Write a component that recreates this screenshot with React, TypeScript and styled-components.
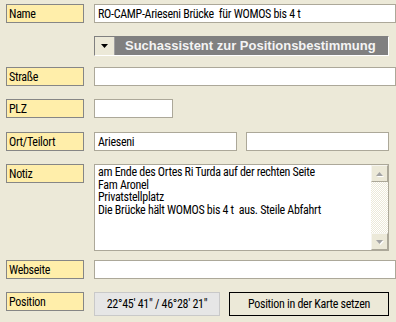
import React from 'react'
import styled, { createGlobalStyle } from 'styled-components'

const GlobalStyle = createGlobalStyle`
    html, body {
        margin: 0;
        padding: 0;
        background: #ece9d8;
    }
    body {
        font-family: "Roboto Condensed", "Liberation Sans", Arial, sans-serif;
        font-size: 12px;
        letter-spacing: -0.3px;
        color: #000;
    }
`

const Form = styled.div`
    width: 396px;
    height: 322px;
    padding: 0 0 0 6px;
    box-sizing: border-box;
    display: flex;
    flex-direction: column;
    overflow: hidden;
`

const Row = styled.div<{ $top: number; $height?: number }>`
    display: flex;
    align-items: flex-start;
    gap: 10px;
    margin-top: ${({ $top }) => $top}px;
    height: ${({ $height }) => $height ?? 19}px;
`

const Label = styled.div<{ $hidden?: boolean }>`
    width: 78px;
    height: 19px;
    box-sizing: border-box;
    flex: none;
    border: 1px solid ${({ $hidden }) => ($hidden ? 'transparent' : '#868686')};
    background: ${({ $hidden }) => ($hidden ? 'transparent' : '#ffeeaa')};
    padding: 2px 0 0 2px;
    line-height: 14px;
    white-space: nowrap;
`

const Fields = styled.div`
    display: flex;
    gap: 9px;
    width: 295px;
`

const Input = styled.div<{ $width?: number }>`
    box-sizing: border-box;
    height: 19px;
    width: ${({ $width }) => ($width ? `${$width}px` : '100%')};
    background: #fff;
    border: 1px solid #aca899;
    padding: 2px 0 0 3px;
    line-height: 14px;
    white-space: nowrap;
    overflow: hidden;
`

const SearchBar = styled.div`
    box-sizing: border-box;
    width: 295px;
    height: 20px;
    display: flex;
    border-top: 1px solid #808080;
    border-left: 1px solid #808080;
    border-right: 1px solid #fff;
    border-bottom: 1px solid #fff;
    background: #808080;
`

const DropButton = styled.div`
    box-sizing: border-box;
    width: 20px;
    flex: none;
    background: #ece9d8;
    border-right: 1px solid #a0a0a0;
    display: flex;
    align-items: center;
    justify-content: center;
`

const SearchTitle = styled.div`
    flex: 1;
    color: #f4f4f4;
    font-family: "Liberation Sans", Arial, sans-serif;
    font-weight: bold;
    font-size: 13px;
    letter-spacing: 0;
    line-height: 18px;
    padding-left: 10px;
    white-space: nowrap;
`

const NoteBox = styled.div`
    box-sizing: border-box;
    width: 295px;
    height: 87px;
    background: #fff;
    border: 1px solid #aca899;
    display: flex;
`

const NoteText = styled.div`
    flex: 1;
    padding: 1px 0 0 3px;
    line-height: 12.5px;
`

const ScrollBar = styled.div`
    width: 17px;
    flex: none;
    display: flex;
    flex-direction: column;
    background-color: #fff;
    background-image: conic-gradient(#ece9d8 25%, #fff 0 50%, #ece9d8 0 75%, #fff 0);
    background-size: 2px 2px;
`

const ScrollButton = styled.div`
    box-sizing: border-box;
    height: 17px;
    background: #ece9d8;
    border: 1px solid #aca899;
    border-top-color: #f6f5ef;
    border-left-color: #f6f5ef;
    display: flex;
    align-items: center;
    justify-content: center;
`

const Track = styled.div`
    flex: 1;
`

const Coord = styled.div`
    box-sizing: border-box;
    width: 126px;
    height: 24px;
    background: #e6e6e6;
    border: 1px solid #c9c9c9;
    text-align: center;
    line-height: 22px;
    white-space: nowrap;
`

const MapButton = styled.div`
    box-sizing: border-box;
    width: 160px;
    height: 24px;
    margin-left: -1px;
    background: #ece9d8;
    border: 1px solid #000;
    text-align: center;
    line-height: 22px;
    white-space: nowrap;
`

function Arrow({ up, color }: { up?: boolean; color: string }) {
    const points = up ? '1,5 4.5,1 8,5' : '1,1 4.5,5 8,1'
    return (
        <svg width="9" height="6" viewBox="0 0 9 6">
            <polygon points={points} fill="#fff" transform="translate(1,1)" />
            <polygon points={points} fill={color} />
        </svg>
    )
}

export default function App() {
    return (
        <>
            <GlobalStyle />
            <Form>
                <Row $top={4}>
                    <Label>Name</Label>
                    <Input>RO-CAMP-Arieseni Brücke&nbsp; für WOMOS bis 4 t</Input>
                </Row>
                <Row $top={13} $height={20}>
                    <Label $hidden />
                    <SearchBar>
                        <DropButton>
                            <svg width="7" height="4" viewBox="0 0 7 4">
                                <polygon points="0,0 7,0 3.5,4" fill="#000" />
                            </svg>
                        </DropButton>
                        <SearchTitle>Suchassistent zur Positionsbestimmung</SearchTitle>
                    </SearchBar>
                </Row>
                <Row $top={11}>
                    <Label>Straße</Label>
                    <Input />
                </Row>
                <Row $top={13}>
                    <Label>PLZ</Label>
                    <Input $width={79} />
                </Row>
                <Row $top={14}>
                    <Label>Ort/Teilort</Label>
                    <Fields>
                        <Input $width={143}>Arieseni</Input>
                        <Input $width={143} />
                    </Fields>
                </Row>
                <Row $top={13} $height={87}>
                    <Label>Notiz</Label>
                    <NoteBox>
                        <NoteText>
                            am Ende des Ortes Ri Turda auf der rechten Seite
                            <br />
                            Fam Aronel
                            <br />
                            Privatstellplatz
                            <br />
                            Die Brücke hält WOMOS bis 4 t&nbsp; aus. Steile Abfahrt
                        </NoteText>
                        <ScrollBar>
                            <ScrollButton>
                                <Arrow up color="#a3a3a3" />
                            </ScrollButton>
                            <Track />
                            <ScrollButton>
                                <Arrow color="#a3a3a3" />
                            </ScrollButton>
                        </ScrollBar>
                    </NoteBox>
                </Row>
                <Row $top={9}>
                    <Label>Webseite</Label>
                    <Input />
                </Row>
                <Row $top={13} $height={24}>
                    <Label>Position</Label>
                    <Coord>22°45' 41" / 46°28' 21"</Coord>
                    <MapButton>Position in der Karte setzen</MapButton>
                </Row>
            </Form>
        </>
    )
}
